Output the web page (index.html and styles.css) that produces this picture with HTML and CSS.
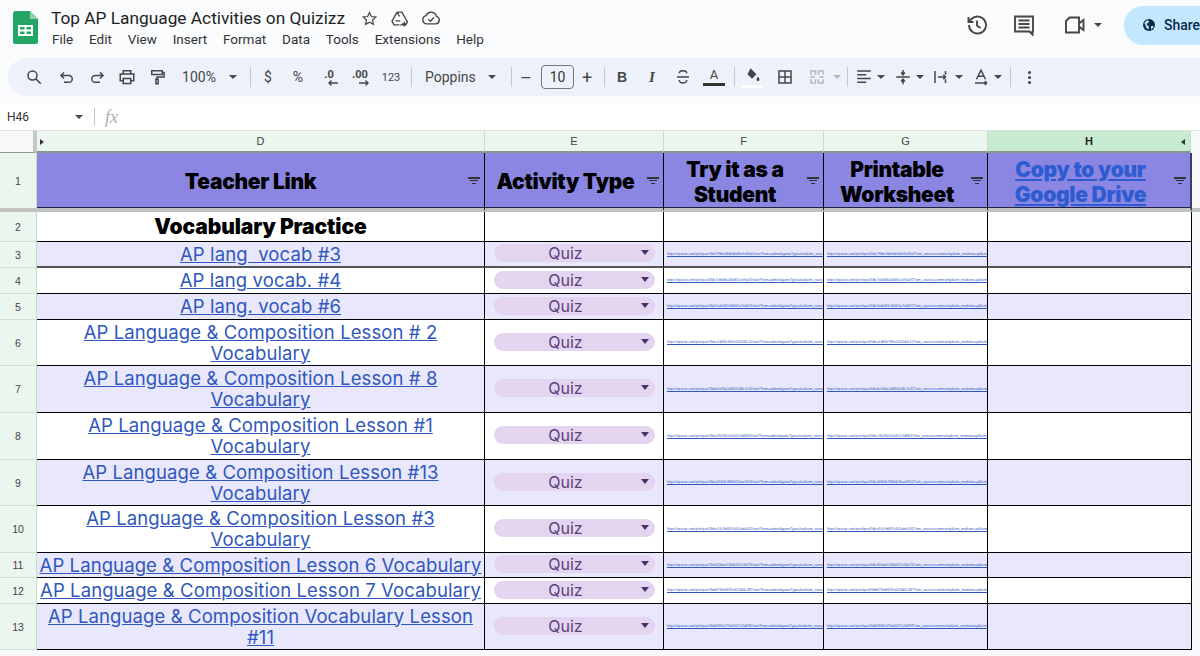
FILE: index.html
```html
<!DOCTYPE html>
<html lang="en">
<head>
<meta charset="utf-8">
<title>Top AP Language Activities on Quizizz</title>
<link rel="stylesheet" href="styles.css">
</head>
<body>
<div class="app">
  <header class="topbar">
    <svg class="logo" viewBox="0 0 25 33"><path fill="#23a566" d="M3 0h14l8 8v22.500a2.500 2.500 0 0 1-2.500 2.500h-20A2.500 2.500 0 0 1 0 30.500V3a3 3 0 0 1 3-3z"/><path fill="#8ed1b1" d="M17 0l8 8h-8z"/><path fill="none" stroke="#fff" stroke-width="2" d="M6 15h13v9H6zM6 19.500h13M12.500 15v9"/></svg>
    <div class="titles">
      <div class="title-row">
        <span class="doc-title">Top AP Language Activities on Quizizz</span>
        <svg class="ti star" viewBox="0 0 24 24"><path d="M12 3.500l2.600 5.700 6.200.7-4.600 4.200 1.300 6.100L12 17.200l-5.500 3 1.300-6.100-4.600-4.200 6.200-.7z"/></svg>
        <svg class="ti drive" viewBox="0 0 24 24"><path d="M9 4h6l7 12-2 4h-7M9 4L2.500 15.500 5 20h7M9 4l3 5.500M7 15h6M18 16v6M15 19h6"/></svg>
        <svg class="ti cloud" viewBox="0 0 24 24"><path d="M7 19a5 5 0 0 1-.8-9.900A6.500 6.500 0 0 1 18.500 10 4.600 4.600 0 0 1 18 19zM9 13.500l2.500 2.500 4-4.500"/></svg>
      </div>
      <nav class="menu">
        <span>File</span><span>Edit</span><span>View</span><span>Insert</span><span>Format</span><span>Data</span><span>Tools</span><span>Extensions</span><span>Help</span>
      </nav>
    </div>
    <div class="top-actions">
      <svg class="ai hist" viewBox="0 0 24 24"><path d="M4 12a8.500 8.500 0 1 0 2.500-6L3.500 9M3.500 4v5h5M12 7.500V12.500l3.500 2.500"/></svg>
      <svg class="ai comm" viewBox="0 0 24 24"><path d="M3 3.500h18v15h-.5v3l-3-3H3zM6.500 7.500h11M6.500 11h11M6.500 14.500h11"/></svg>
      <svg class="ai video" viewBox="0 0 24 24"><path d="M6.500 4.500h9.500v15H3V8zM16 10.500l4.500-3.500v10L16 13.500"/></svg>
      <span class="caret caret-video"></span>
      <div class="share">
        <svg class="globe" viewBox="0 0 24 24"><circle cx="12" cy="12" r="9" fill="#0b2a4a"/><path fill="#c9e4fb" d="M5 9l4-4 3 1-1 3-3 1 2 3 2 1-1 5-3-3-1-3zM15 14l3-1 1 2-4 4z"/></svg>
        <span class="share-text">Share</span>
      </div>
    </div>
  </header>

  <div class="toolbar">
    <span class="t w30"><svg class="ic" viewBox="0 0 24 24"><path d="M10 4a6 6 0 1 0 0 12 6 6 0 0 0 0-12zM14.500 14.500L21 21"/></svg></span>
    <span class="t w30 ml3"><svg class="ic" viewBox="0 0 24 24"><path d="M8 6L4 10l4 4M4 10h10.500a4.500 4.500 0 0 1 0 9H8"/></svg></span>
    <span class="t w30"><svg class="ic" viewBox="0 0 24 24"><path d="M16 6l4 4-4 4M20 10H9.500a4.500 4.500 0 0 0 0 9H16"/></svg></span>
    <span class="t w30"><svg class="ic" viewBox="0 0 24 24"><path d="M7 8V3.500h10V8M7 17H3V8h18v9h-4M7 14h10v6.500H7z"/></svg></span>
    <span class="t w30"><svg class="ic" viewBox="0 0 24 24"><path d="M5 3.500h14v5H5zM19 6h2.500v6H12v3M10.500 15h3v6h-3z"/></svg></span>
    <span class="t w54 label">100%</span>
    <span class="t w14"><span class="caret"></span></span>
    <span class="sep ml10"></span>
    <span class="t w30 ml2 small">$</span>
    <span class="t w30 small">%</span>
    <span class="t w30 ml1 dec"><span class="dec-text">.0</span><svg class="dec-arrow" viewBox="0 0 12 6"><path d="M11 3H2M4.500 .5L2 3l2.500 2.500"/></svg></span>
    <span class="t w32 dec"><span class="dec-text">.00</span><svg class="dec-arrow" viewBox="0 0 12 6"><path d="M1 3h9M7.500 .5L10 3 7.500 5.500"/></svg></span>
    <span class="t w30 tiny">123</span>
    <span class="sep ml5"></span>
    <span class="t w60 ml13 font-name">Poppins</span>
    <span class="t w14"><span class="caret"></span></span>
    <span class="sep ml12"></span>
    <span class="t w28 plain">&#8211;</span>
    <span class="size ml1">10</span>
    <span class="t w26 plain">+</span>
    <span class="sep ml4"></span>
    <span class="t w30 ml2 bold">B</span>
    <span class="t w30 ital">I</span>
    <span class="t w30 ml1"><svg class="ic" viewBox="0 0 24 24"><path d="M17 7a5 3.500 0 0 0-10 0M4 12h16M7 16a5 4 0 0 0 10 0"/></svg></span>
    <span class="t w30 ml1 col-a"><span class="a-letter">A</span><span class="a-bar"></span></span>
    <span class="sep ml5"></span>
    <span class="t w30 ml2 col-a"><svg class="ic fill" viewBox="0 0 24 24"><path class="solid" d="M10 3l8 8-6 6-6-6zM20 14c1.200 2 2 3 2 4a2 2 0 0 1-4 0c0-1 .8-2 2-4z"/></svg><span class="white-bar"></span></span>
    <span class="t w30 ml3"><svg class="ic" viewBox="0 0 24 24"><path d="M4 4h16v16H4zM12 4v16M4 12h16"/></svg></span>
    <span class="t w30 ml2"><svg class="ic dim" viewBox="0 0 24 24"><path d="M4 9V4h6v5M14 9V4h6v5M4 15v5h6v-5M14 15v5h6v-5M9 12H3M15 12h6"/></svg></span>
    <span class="t w10"><span class="caret dim-caret"></span></span>
    <span class="sep ml5"></span>
    <span class="t w22 ml5"><svg class="ic" viewBox="0 0 24 24"><path d="M3 4h18M3 9h12M3 14h18M3 19h12"/></svg></span>
    <span class="t w10 ml1"><span class="caret"></span></span>
    <span class="t w22 ml6"><svg class="ic" viewBox="0 0 24 24"><path d="M3 12h18M12 2.500v6M9.500 6l2.500 3 2.500-3M12 21.500v-6M9.500 18l2.500-3 2.500 3"/></svg></span>
    <span class="t w10 ml1"><span class="caret"></span></span>
    <span class="t w22 ml5"><svg class="ic" viewBox="0 0 24 24"><path d="M4 4v16M18 4v5M18 15v5M8 12h10M15 9l3 3-3 3"/></svg></span>
    <span class="t w10 ml2"><span class="caret"></span></span>
    <span class="t w22 ml6"><svg class="ic" viewBox="0 0 24 24"><path d="M6 15L12 3l6 12M8 11h8M4 20h15M17 17.500l2.500 2.500-2.500 2.500"/></svg></span>
    <span class="t w10 ml1"><span class="caret"></span></span>
    <span class="sep ml7"></span>
    <span class="t w30 ml3"><span class="dots"></span></span>
  </div>

  <div class="namebar">
    <span class="cell-ref">H46</span>
    <span class="caret"></span>
    <span class="sep namesep"></span>
    <span class="fx">fx</span>
  </div>

  <main class="sheet">
    <div class="corner"></div>
    <div class="colhead frozen"><span class="abs-tri"></span>D</div>
    <div class="colhead">E</div>
    <div class="colhead">F</div>
    <div class="colhead">G</div>
    <div class="colhead active">H<span class="tri-l"></span></div>
    <div class="gutter"></div>

    <div class="rowhead head-end">1</div>
    <div class="hcell head-end d-col">Teacher Link<span class="filter"></span></div>
    <div class="hcell head-end">Activity Type<span class="filter"></span></div>
    <div class="hcell head-end">Try it as a Student<span class="filter"></span></div>
    <div class="hcell head-end">Printable Worksheet<span class="filter"></span></div>
    <div class="hcell head-end last"><a class="hlink">Copy to your Google Drive</a><span class="filter"></span></div>
    <div class="gutter head-end"></div>

    <div class="rowhead">2</div>
    <div class="cell section">Vocabulary Practice</div>
    <div class="cell"></div><div class="cell"></div><div class="cell"></div><div class="cell last"></div>
    <div class="gutter"></div>

    <div class="rowhead">3</div>
    <div class="cell band dark"><a class="link">AP lang&nbsp; vocab #3</a></div>
    <div class="cell band dark"><div class="chip">Quiz<span class="chip-caret"></span></div></div>
    <div class="cell band dark url"><a>https://quizizz.com/join/quiz/5fdc79bbc6bb0d0d4a9c63a0/start?from=admin&amp;gameType=live&amp;utm_source=community&amp;utm_medium=apl</a></div>
    <div class="cell band dark url"><a>https://quizizz.com/print/quiz/5fdc79bbc6bb0d0d4a9c63a0?utm_source=community&amp;utm_medium=apl&amp;utm_campaign=lang</a></div>
    <div class="cell band dark last"></div>
    <div class="gutter"></div>

    <div class="rowhead">4</div>
    <div class="cell"><a class="link">AP lang vocab. #4</a></div>
    <div class="cell"><div class="chip">Quiz<span class="chip-caret"></span></div></div>
    <div class="cell url"><a>https://quizizz.com/join/quiz/5fdc7cb6d6a5b3d1c5e9a0f1/start?from=admin&amp;gameType=live&amp;utm_source=community&amp;utm_medium=apl</a></div>
    <div class="cell url"><a>https://quizizz.com/print/quiz/5fdc7cb6d6a5b3d1c5e9a0f1?utm_source=community&amp;utm_medium=apl&amp;utm_campaign=lang</a></div>
    <div class="cell last"></div>
    <div class="gutter"></div>

    <div class="rowhead">5</div>
    <div class="cell band"><a class="link">AP lang. vocab #6</a></div>
    <div class="cell band"><div class="chip">Quiz<span class="chip-caret"></span></div></div>
    <div class="cell band url"><a>https://quizizz.com/join/quiz/5fdc9a0b4f2c8d001e7a6b21/start?from=admin&amp;gameType=live&amp;utm_source=community&amp;utm_medium=apl</a></div>
    <div class="cell band url"><a>https://quizizz.com/print/quiz/5fdc9a0b4f2c8d001e7a6b21?utm_source=community&amp;utm_medium=apl&amp;utm_campaign=lang</a></div>
    <div class="cell band last"></div>
    <div class="gutter"></div>

    <div class="rowhead">6</div>
    <div class="cell"><a class="link">AP Language &amp; Composition Lesson # 2 Vocabulary</a></div>
    <div class="cell"><div class="chip">Quiz<span class="chip-caret"></span></div></div>
    <div class="cell url"><a>https://quizizz.com/join/quiz/5fdca1d83e7b9c001f2d4c10/start?from=admin&amp;gameType=live&amp;utm_source=community&amp;utm_medium=apl</a></div>
    <div class="cell url"><a>https://quizizz.com/print/quiz/5fdca1d83e7b9c001f2d4c10?utm_source=community&amp;utm_medium=apl&amp;utm_campaign=lang</a></div>
    <div class="cell last"></div>
    <div class="gutter"></div>

    <div class="rowhead">7</div>
    <div class="cell band"><a class="link">AP Language &amp; Composition Lesson # 8 Vocabulary</a></div>
    <div class="cell band"><div class="chip">Quiz<span class="chip-caret"></span></div></div>
    <div class="cell band url"><a>https://quizizz.com/join/quiz/5fdcb2e96a1d4f001d8c7e32/start?from=admin&amp;gameType=live&amp;utm_source=community&amp;utm_medium=apl</a></div>
    <div class="cell band url"><a>https://quizizz.com/print/quiz/5fdcb2e96a1d4f001d8c7e32?utm_source=community&amp;utm_medium=apl&amp;utm_campaign=lang</a></div>
    <div class="cell band last"></div>
    <div class="gutter"></div>

    <div class="rowhead">8</div>
    <div class="cell"><a class="link">AP Language &amp; Composition Lesson #1 Vocabulary</a></div>
    <div class="cell"><div class="chip">Quiz<span class="chip-caret"></span></div></div>
    <div class="cell url"><a>https://quizizz.com/join/quiz/5fdcc3fa7b2e5a001c9d8f43/start?from=admin&amp;gameType=live&amp;utm_source=community&amp;utm_medium=apl</a></div>
    <div class="cell url"><a>https://quizizz.com/print/quiz/5fdcc3fa7b2e5a001c9d8f43?utm_source=community&amp;utm_medium=apl&amp;utm_campaign=lang</a></div>
    <div class="cell last"></div>
    <div class="gutter"></div>

    <div class="rowhead">9</div>
    <div class="cell band"><a class="link">AP Language &amp; Composition Lesson #13 Vocabulary</a></div>
    <div class="cell band"><div class="chip">Quiz<span class="chip-caret"></span></div></div>
    <div class="cell band url"><a>https://quizizz.com/join/quiz/5fdcd40b8c3f6b001bae9054/start?from=admin&amp;gameType=live&amp;utm_source=community&amp;utm_medium=apl</a></div>
    <div class="cell band url"><a>https://quizizz.com/print/quiz/5fdcd40b8c3f6b001bae9054?utm_source=community&amp;utm_medium=apl&amp;utm_campaign=lang</a></div>
    <div class="cell band last"></div>
    <div class="gutter"></div>

    <div class="rowhead">10</div>
    <div class="cell"><a class="link">AP Language &amp; Composition Lesson #3 Vocabulary</a></div>
    <div class="cell"><div class="chip">Quiz<span class="chip-caret"></span></div></div>
    <div class="cell url"><a>https://quizizz.com/join/quiz/5fdce51c9d407c001abfa165/start?from=admin&amp;gameType=live&amp;utm_source=community&amp;utm_medium=apl</a></div>
    <div class="cell url"><a>https://quizizz.com/print/quiz/5fdce51c9d407c001abfa165?utm_source=community&amp;utm_medium=apl&amp;utm_campaign=lang</a></div>
    <div class="cell last"></div>
    <div class="gutter"></div>

    <div class="rowhead">11</div>
    <div class="cell band"><a class="link one-line">AP Language &amp; Composition Lesson 6 Vocabulary</a></div>
    <div class="cell band"><div class="chip">Quiz<span class="chip-caret"></span></div></div>
    <div class="cell band url"><a>https://quizizz.com/join/quiz/5fdcf62dae518d0019c0b276/start?from=admin&amp;gameType=live&amp;utm_source=community&amp;utm_medium=apl</a></div>
    <div class="cell band url"><a>https://quizizz.com/print/quiz/5fdcf62dae518d0019c0b276?utm_source=community&amp;utm_medium=apl&amp;utm_campaign=lang</a></div>
    <div class="cell band last"></div>
    <div class="gutter"></div>

    <div class="rowhead">12</div>
    <div class="cell"><a class="link one-line">AP Language &amp; Composition Lesson 7 Vocabulary</a></div>
    <div class="cell"><div class="chip">Quiz<span class="chip-caret"></span></div></div>
    <div class="cell url"><a>https://quizizz.com/join/quiz/5fdd073ebf629e0018d1c387/start?from=admin&amp;gameType=live&amp;utm_source=community&amp;utm_medium=apl</a></div>
    <div class="cell url"><a>https://quizizz.com/print/quiz/5fdd073ebf629e0018d1c387?utm_source=community&amp;utm_medium=apl&amp;utm_campaign=lang</a></div>
    <div class="cell last"></div>
    <div class="gutter"></div>

    <div class="rowhead">13</div>
    <div class="cell band"><a class="link">AP Language &amp; Composition Vocabulary Lesson #11</a></div>
    <div class="cell band"><div class="chip">Quiz<span class="chip-caret"></span></div></div>
    <div class="cell band url"><a>https://quizizz.com/join/quiz/5fdd184fc073af0017e2d498/start?from=admin&amp;gameType=live&amp;utm_source=community&amp;utm_medium=apl</a></div>
    <div class="cell band url"><a>https://quizizz.com/print/quiz/5fdd184fc073af0017e2d498?utm_source=community&amp;utm_medium=apl&amp;utm_campaign=lang</a></div>
    <div class="cell band last"></div>
    <div class="gutter"></div>
  </main>
</div>
</body>
</html>
```
FILE: styles.css
```css
* { box-sizing: border-box; }
html, body { margin: 0; height: 100%; }
body { width: 1200px; height: 656px; overflow: hidden; background: #f9fbfd; font-family: "Inter", "Liberation Sans", sans-serif; color: #1f1f1f; }
.app { display: flex; flex-direction: column; height: 656px; }

.topbar { display: flex; height: 58px; flex: none; position: relative; }
.logo { width: 25px; height: 33px; margin: 11px 0 0 13px; flex: none; }
.titles { margin-left: 13px; padding-top: 6px; flex: none; }
.title-row { display: flex; align-items: center; height: 24px; }
.doc-title { font: 17.300px/24px "Roboto", sans-serif; color: #1f1f1f; width: 292px; white-space: nowrap; }
.ti { fill: none; stroke: #444746; stroke-width: 1.7; flex: none; }
.star { width: 17px; height: 17px; margin-left: 18px; }
.drive { width: 19px; height: 19px; margin-left: 12px; }
.cloud { width: 20px; height: 20px; margin-left: 12px; }
.menu { display: flex; gap: 15.800px; font: 13.500px/18px "Roboto", sans-serif; color: #333; padding-left: 1px; }

.top-actions { margin-left: auto; display: flex; align-items: center; height: 50px; flex: none; }
.ai { fill: none; stroke: #444746; stroke-width: 1.9; width: 24px; height: 24px; flex: none; }
.comm { margin-left: 23px; }
.video { margin-left: 27px; }
.caret { display: inline-block; width: 0; height: 0; border: 4px solid transparent; border-top: 4px solid #444746; border-bottom: 0; flex: none; }
.caret-video { margin-left: 7px; }
.share { margin-left: 22px; width: 76px; height: 39px; background: #c2e7ff; border-radius: 20px 0 0 20px; display: flex; align-items: center; padding-left: 17px; gap: 7px; flex: none; }
.globe { width: 16px; height: 16px; flex: none; }
.share-text { font: 500 14px "Roboto", sans-serif; color: #0b2a4a; white-space: nowrap; }

.toolbar { display: flex; align-items: center; height: 38px; flex: none; margin-left: 8px; padding-left: 11px; background: #edf2fa; border-radius: 19px 0 0 19px; color: #444746; overflow: hidden; }
.t { display: flex; align-items: center; justify-content: center; height: 28px; flex: none; font: 13px "Roboto", sans-serif; white-space: nowrap; }
.w10 { width: 10px; } .w14 { width: 14px; } .w22 { width: 22px; } .w26 { width: 26px; } .w28 { width: 28px; } .w30 { width: 30px; } .w32 { width: 32px; } .w54 { width: 54px; } .w60 { width: 60px; }
.ml1 { margin-left: 1px; } .ml2 { margin-left: 2px; } .ml3 { margin-left: 3px; } .ml4 { margin-left: 4px; } .ml5 { margin-left: 5px; } .ml6 { margin-left: 6px; } .ml7 { margin-left: 7px; } .ml10 { margin-left: 10px; } .ml12 { margin-left: 12px; } .ml13 { margin-left: 13px; }
.ic { width: 18px; height: 18px; fill: none; stroke: #444746; stroke-width: 2; flex: none; }
.ic.dim { stroke: #b4b8bb; }
.dim-caret { border-top-color: #b4b8bb; }
.solid { fill: #444746; stroke: none; }
.dec { flex-direction: column; }
.dec-text { font: 700 11px/11px "Roboto", sans-serif; }
.dec-arrow { width: 12px; height: 6px; margin-left: 8px; fill: none; stroke: #444746; stroke-width: 1.4; }
.sep { width: 1px; height: 20px; background: #c7c7c7; flex: none; }
.label { font-size: 14px; }
.small { font-size: 14px; }
.tiny { font-size: 11px; }
.font-name { justify-content: flex-start; font-size: 14px; }
.plain { font-size: 18px; font-weight: 400; }
.size { width: 33px; height: 24px; border: 1px solid #747775; border-radius: 4px; font: 14px/22px "Roboto", sans-serif; text-align: center; flex: none; color: #333; }
.bold { font: 700 14px "Liberation Sans", sans-serif; }
.ital { font: italic 700 15px "Liberation Serif", serif; }
.col-a { flex-direction: column; }
.a-letter { font-size: 13px; line-height: 14px; }
.a-bar { width: 22px; height: 3px; background: #333; margin-top: 1px; }
.white-bar { width: 22px; height: 3px; background: #fff; margin-top: 1px; }
.dots { width: 3px; height: 3px; border-radius: 50%; background: #444746; box-shadow: 0 -5px 0 #444746, 0 5px 0 #444746; }

.namebar { display: flex; align-items: center; height: 26px; margin-top: 8px; background: #fff; flex: none; padding-left: 7px; }
.cell-ref { font: 12px "Roboto", sans-serif; color: #333; width: 68px; }
.namesep { height: 18px; margin-left: 11px; }
.fx { font: italic 18px "Liberation Serif", serif; color: #b0b0b0; margin-left: 10px; }

.sheet { flex: 1; display: grid; grid-template-columns: 37px 448px 179px 160px 164px 204px 1fr; grid-template-rows: 22px 59px 30px 26px 26px 26px 46px 47px 47px 46px 47px 25px 26px 46px; background: #f8f9fa; border-top: 1px solid #e0e0e0; overflow: hidden; }
.corner { background: #f8f9fa; border-right: 4px solid #c4c7c5; border-bottom: 1px solid #8a9a8e; }
.colhead { position: relative; display: flex; align-items: center; justify-content: center; background: #ebf6ee; color: #444; font: 11px "Liberation Sans", sans-serif; border-right: 1px solid #c5dccb; border-bottom: 2px solid #87978c; }
.colhead.active { background: #c8ead0; font-weight: 700; color: #222; margin-right: 1px; }
.abs-tri { position: absolute; left: 3px; top: 8px; width: 0; height: 0; border: 3px solid transparent; border-left: 4px solid #333; border-right: 0; }
.tri-l { position: absolute; right: 5px; top: 8px; width: 0; height: 0; border: 3px solid transparent; border-right: 4px solid #333; border-left: 0; }
.rowhead { display: flex; align-items: center; justify-content: center; background: #ebf6ee; color: #444; font: 10.500px "Liberation Sans", sans-serif; border-bottom: 1px solid #cfe0d4; border-right: 1px solid #c5dccb; }
.gutter { background: #f8f9fa; }
.head-end { border-bottom: 4px solid #bfc4c0; }

.hcell { position: relative; display: flex; align-items: center; justify-content: center; text-align: center; background: #8a86e2; color: #000; font-weight: 900; font-size: 21px; line-height: 25px; letter-spacing: -.3px; padding: 2px 25px 0 8px; border-right: 1px solid #000; box-shadow: inset 0 -1px 0 #1d2340; }
.hcell.d-col { padding: 2px 20px 0 0; }
.last { border-right: 2px solid #9aaa9c; }
.hcell.last { border-right: 2px solid #3a4066; }
.hlink { color: #2d5bd0; text-decoration: underline; }
.filter { position: absolute; right: 4px; top: 24px; width: 12px; height: 2px; background: #333; }
.filter::before { content: ""; position: absolute; left: 2px; top: 3px; width: 8px; height: 1px; background: #333; }
.filter::after { content: ""; position: absolute; left: 4px; top: 6px; width: 4px; height: 1px; background: #333; }

.cell { display: flex; align-items: center; justify-content: center; text-align: center; background: #fff; border-right: 1px solid #000; border-bottom: 1px solid #000; min-width: 0; }
.band { background: #e8e7fc; }
.dark { border-bottom: 2px solid #555; }
.section { font-weight: 900; font-size: 21px; color: #000; letter-spacing: -.1px; }
.link { color: #2f57bd; text-decoration: underline; font-size: 18.500px; line-height: 21px; letter-spacing: .1px; }
.one-line { white-space: nowrap; }
.chip { position: relative; width: 161px; height: 18px; margin-bottom: 2px; border-radius: 9px; background: #e3d5f0; color: #5b3f78; font-size: 16px; line-height: 18px; padding-right: 17px; text-align: center; }
.chip-caret { position: absolute; right: 6px; top: 6px; width: 0; height: 0; border: 4.500px solid transparent; border-top: 5px solid #4a2f68; border-bottom: 0; }
.url { justify-content: flex-start; padding-left: 3px; }
.url a { display: block; min-width: 0; overflow: hidden; font: 3.400px/5px "Liberation Sans", sans-serif; color: #2f57bd; text-decoration: underline; white-space: nowrap; }
```
